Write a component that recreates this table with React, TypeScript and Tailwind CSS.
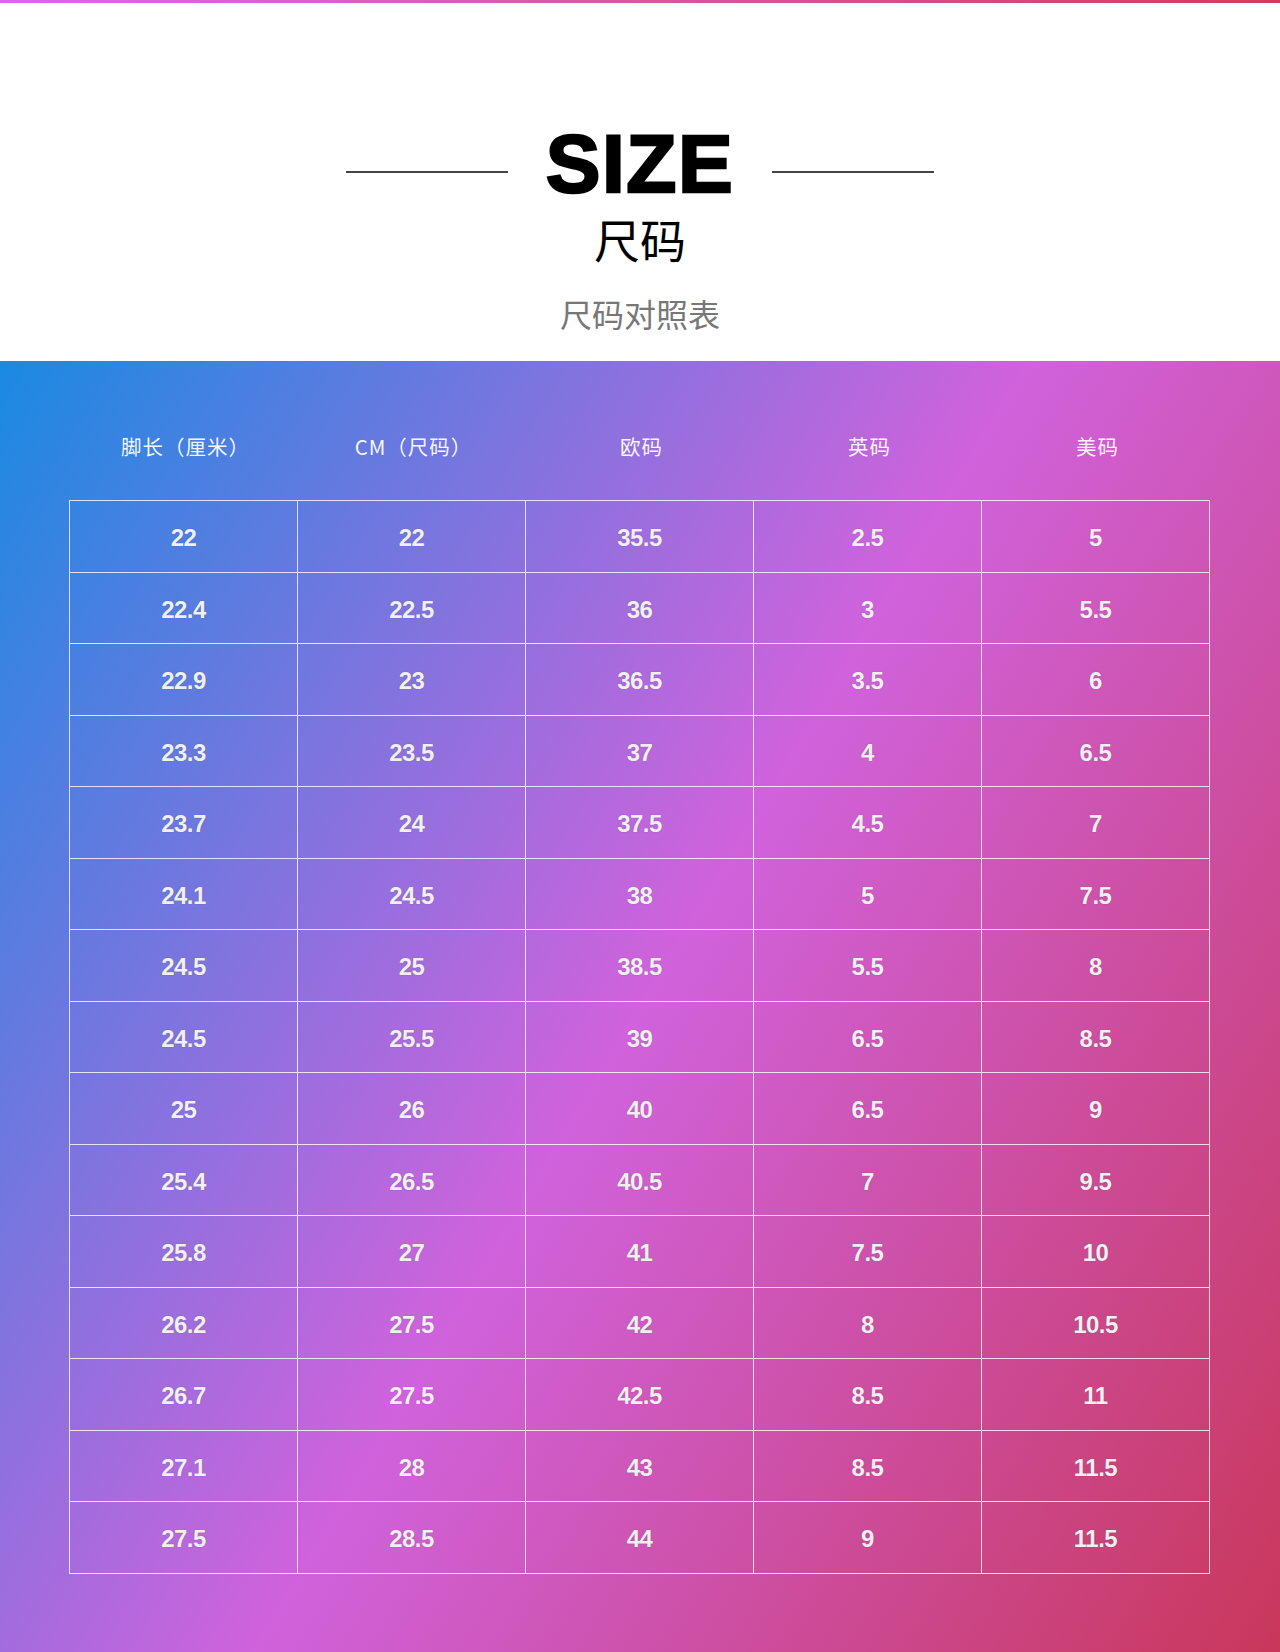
import React from "react";

const rows: string[][] = [
  ["22", "22", "35.5", "2.5", "5"],
  ["22.4", "22.5", "36", "3", "5.5"],
  ["22.9", "23", "36.5", "3.5", "6"],
  ["23.3", "23.5", "37", "4", "6.5"],
  ["23.7", "24", "37.5", "4.5", "7"],
  ["24.1", "24.5", "38", "5", "7.5"],
  ["24.5", "25", "38.5", "5.5", "8"],
  ["24.5", "25.5", "39", "6.5", "8.5"],
  ["25", "26", "40", "6.5", "9"],
  ["25.4", "26.5", "40.5", "7", "9.5"],
  ["25.8", "27", "41", "7.5", "10"],
  ["26.2", "27.5", "42", "8", "10.5"],
  ["26.7", "27.5", "42.5", "8.5", "11"],
  ["27.1", "28", "43", "8.5", "11.5"],
  ["27.5", "28.5", "44", "9", "11.5"],
];

const headers = ["脚长（厘米）", "CM（尺码）", "欧码", "英码", "美码"];

export default function App() {
  return (
    <div className="w-[1280px] h-[1652px] flex flex-col bg-white overflow-hidden">
      <div className="h-[3px] w-full bg-linear-to-r from-[#da68ea] to-[#d43a5c]" />
      <div className="h-[358px] flex flex-col items-center pt-[120px]">
        <div className="flex items-start">
          <div className="w-[162px] h-[2px] bg-[#444] mt-[48px]" />
          <div
            className="mx-[38px] text-[82px] leading-[82px] font-bold text-black tracking-[1.5px] [-webkit-text-stroke:2.5px_#000]"
            style={{ fontFamily: '"Liberation Sans", Arial, sans-serif' }}
          >
            SIZE
          </div>
          <div className="w-[162px] h-[2px] bg-[#444] mt-[48px]" />
        </div>
        <div
          className="mt-[10px] text-[46px] leading-[46px] text-black"
          style={{ fontFamily: '"Noto Sans CJK SC", sans-serif' }}
        >
          尺码
        </div>
        <div
          className="mt-[36px] text-[32px] leading-[32px] text-[#777]"
          style={{ fontFamily: '"Noto Sans CJK SC", sans-serif' }}
        >
          尺码对照表
        </div>
      </div>
      <div className="flex-1 bg-[linear-gradient(121deg,#1a8ae2_0%,#d062dc_50%,#c9375a_100%)] pt-[60px]">
        <div className="ml-[69px] w-[1141px]">
          <div className="grid grid-cols-[repeat(5,228px)] pl-[1px] h-[50px] mb-[29px]">
            {headers.map((h) => (
              <div
                key={h}
                className="flex items-center justify-center pl-[3px] text-[20.5px] tracking-[1px] text-white/95"
                style={{ fontFamily: '"Noto Sans CJK SC", sans-serif' }}
              >
                {h}
              </div>
            ))}
          </div>
          <div className="grid grid-cols-[repeat(5,228px)] border-t border-l border-white/80">
            {rows.map((r, i) =>
              r.map((c, j) => (
                <div
                  key={`${i}-${j}`}
                  className="h-[71.5px] border-r border-b border-white/80 flex items-center justify-center pt-[4px] text-[24px] font-bold tracking-[-0.5px] text-[#f0f0f0] [text-shadow:0_0_1px_rgba(0,0,0,0.3)]"
                  style={{ fontFamily: '"Liberation Sans", Arial, sans-serif' }}
                >
                  {c}
                </div>
              ))
            )}
          </div>
        </div>
      </div>
    </div>
  );
}
